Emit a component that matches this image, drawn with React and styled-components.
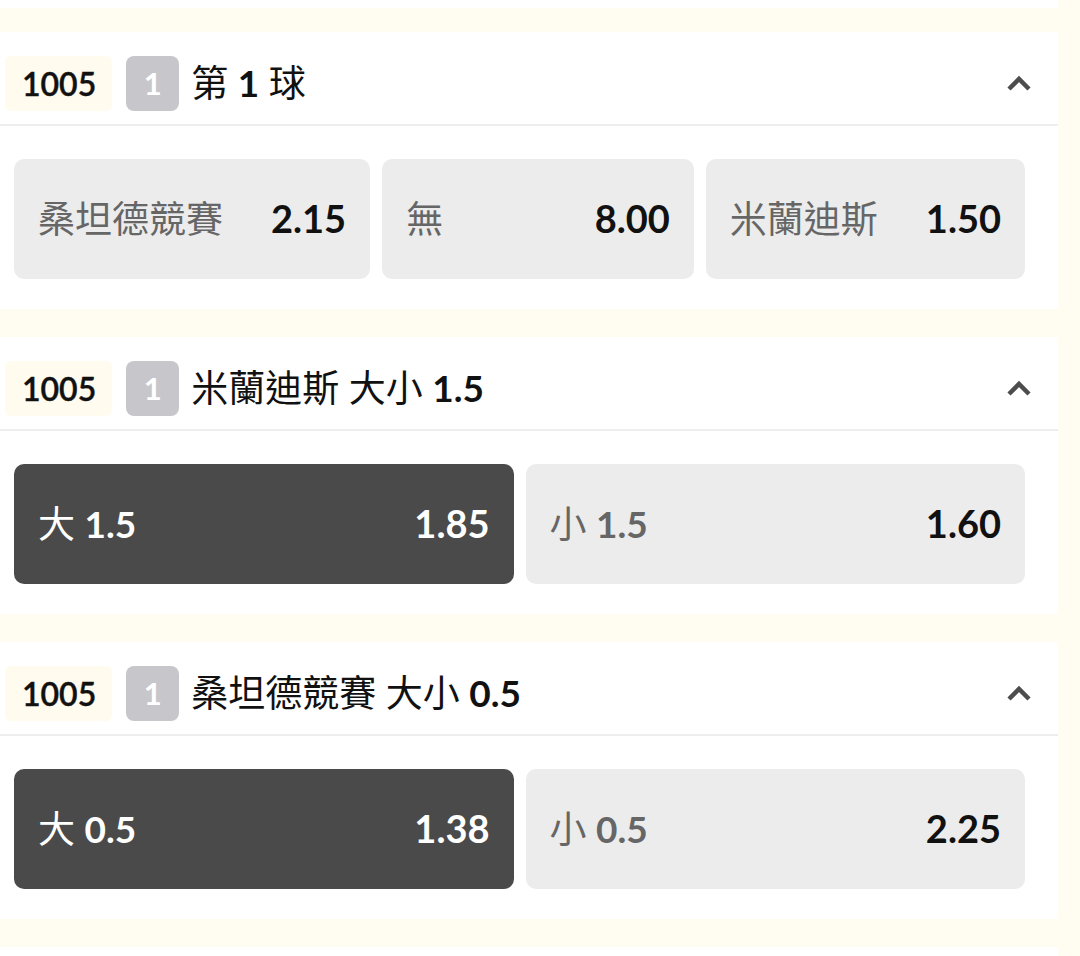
import React from "react";
import styled, { createGlobalStyle } from "styled-components";

const Global = createGlobalStyle`
  html, body { margin: 0; padding: 0; background: #fffcf2; }
  body { font-family: "Lato", "Noto Sans CJK TC", sans-serif; }
`;

const Page = styled.div`
  display: flex;
  flex-direction: column;
  gap: 28px;
  padding-right: 22px;
  background: #fffcf2;
`;

const Tail = styled.div`
  height: ${(p) => p.$h}px;
  background: #ffffff;
  margin-bottom: ${(p) => p.$mb || 0}px;
`;

const Card = styled.section`
  background: #ffffff;
`;

const Header = styled.div`
  display: flex;
  align-items: center;
  height: 55px;
  padding: 24px 26px 13px 5px;
  border-bottom: 2px solid #eeeeee;
`;

const Code = styled.span`
  height: 55px;
  padding: 0 16px 0 17px;
  display: flex;
  align-items: center;
  background: #fffbee;
  border-radius: 6px;
  font-family: "Lato", sans-serif;
  font-weight: 600;
  font-size: 32px;
  line-height: 1;
  color: #111;
  -webkit-text-stroke: 0.4px #111;
`;

const Num = styled.span`
  width: 53px;
  height: 55px;
  margin-left: 14px;
  display: flex;
  align-items: center;
  justify-content: center;
  background: #c7c7cb;
  border-radius: 8px;
  color: #fff;
  font-family: "Lato", sans-serif;
  font-weight: 700;
  font-size: 31px;
  line-height: 1;
`;

const Title = styled.span`
  margin-left: 12px;
  font-size: 37px;
  line-height: 1.2;
  color: #111;
  white-space: nowrap;
  flex: 1;
  b { font-weight: 700; }
`;

const Chevron = styled.svg`
  width: 26px;
  height: 18px;
  margin-top: -2px;
`;

const Body = styled.div`
  display: flex;
  gap: 12px;
  padding: 33px 33px 30px 14px;
`;

const Odd = styled.button`
  flex: 1 1 0;
  height: 120px;
  display: flex;
  align-items: center;
  justify-content: space-between;
  gap: 48px;
  padding: 0 24px;
  border: none;
  border-radius: 10px;
  background: ${(p) => (p.$active ? "#4a4a4a" : "#ececec")};
  font-family: "Lato", "Noto Sans CJK TC", sans-serif;
  line-height: 1.2;
  white-space: nowrap;
  cursor: pointer;
`;

const Label = styled.span`
  font-size: 37px;
  color: ${(p) => (p.$active ? "#ffffff" : "#666666")};
  b { font-weight: 700; }
`;

const Value = styled.span`
  font-size: 38px;
  font-weight: 700;
  color: ${(p) => (p.$active ? "#ffffff" : "#111111")};
`;

const markets = [
  {
    title: (
      <>
        第 <b>1</b> 球
      </>
    ),
    odds: [
      { label: "桑坦德競賽", value: "2.15" },
      { label: "無", value: "8.00" },
      { label: "米蘭迪斯", value: "1.50" },
    ],
  },
  {
    title: (
      <>
        米蘭迪斯 大小 <b>1.5</b>
      </>
    ),
    odds: [
      { label: (<>大 <b>1.5</b></>), value: "1.85", active: true },
      { label: (<>小 <b>1.5</b></>), value: "1.60" },
    ],
  },
  {
    title: (
      <>
        桑坦德競賽 大小 <b>0.5</b>
      </>
    ),
    odds: [
      { label: (<>大 <b>0.5</b></>), value: "1.38", active: true },
      { label: (<>小 <b>0.5</b></>), value: "2.25" },
    ],
  },
];

export default function App() {
  return (
    <>
      <Global />
      <Page>
        <Tail $h={8} $mb={-4} />
        {markets.map((m, i) => (
          <Card key={i}>
            <Header>
              <Code>1005</Code>
              <Num>1</Num>
              <Title>{m.title}</Title>
              <Chevron viewBox="0 0 26 18">
                <polyline
                  points="3,15 13,5 23,15"
                  fill="none"
                  stroke="#4d4d4d"
                  strokeWidth="4.5"
                />
              </Chevron>
            </Header>
            <Body>
              {m.odds.map((o, j) => (
                <Odd key={j} $active={o.active}>
                  <Label $active={o.active}>{o.label}</Label>
                  <Value $active={o.active}>{o.value}</Value>
                </Odd>
              ))}
            </Body>
          </Card>
        ))}
        <Tail $h={40} />
      </Page>
    </>
  );
}
